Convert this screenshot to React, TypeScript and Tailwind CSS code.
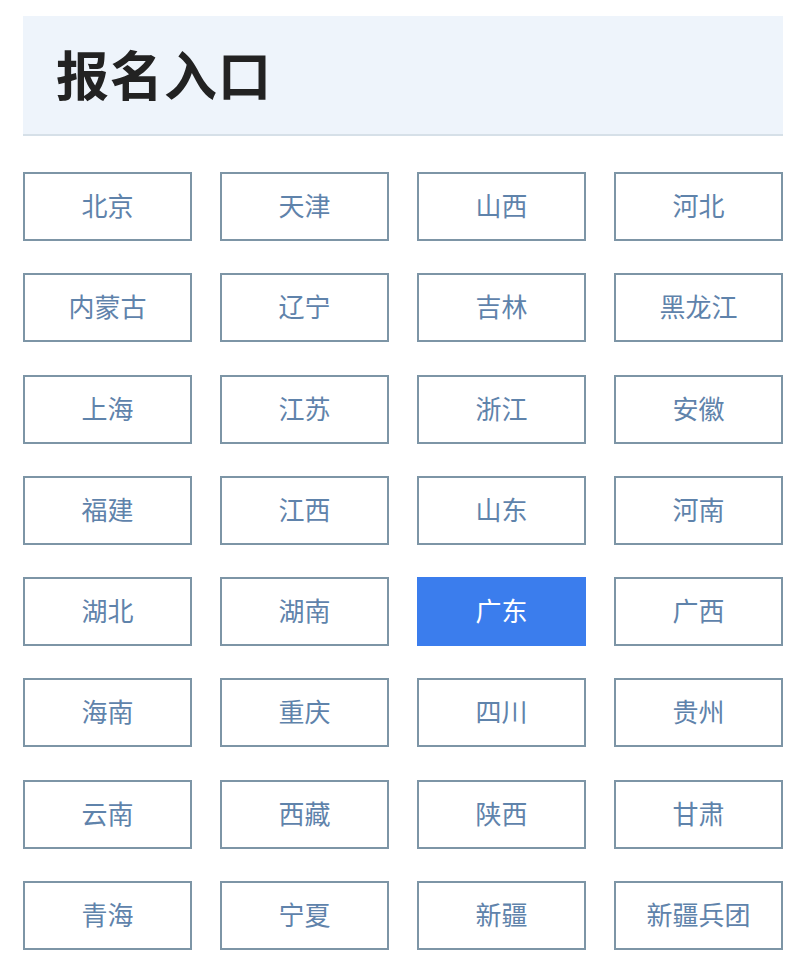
import React from "react";

const provinces = [
  "北京", "天津", "山西", "河北",
  "内蒙古", "辽宁", "吉林", "黑龙江",
  "上海", "江苏", "浙江", "安徽",
  "福建", "江西", "山东", "河南",
  "湖北", "湖南", "广东", "广西",
  "海南", "重庆", "四川", "贵州",
  "云南", "西藏", "陕西", "甘肃",
  "青海", "宁夏", "新疆", "新疆兵团",
];

const App: React.FC = () => {
  const active = "广东";

  return (
    <div
      className="w-[800px] h-[968px] bg-white pt-[16px] pl-[23px] pr-[17px]"
      style={{ fontFamily: '"Noto Sans", "Noto Sans CJK SC", sans-serif' }}
    >
      {/* header */}
      <div className="h-[120px] bg-[#eef4fb] border-b-2 border-[#d6e0e8] flex items-center pl-[33px]">
        <h1 className="text-[53px] font-bold text-[#222] leading-none tracking-[1px]">
          报名入口
        </h1>
      </div>

      {/* province grid */}
      <div className="grid grid-cols-4 gap-x-[28px] gap-y-[32.3px] mt-[36px]">
        {provinces.map((name) => (
          <button
            key={name}
            className={`h-[69px] flex items-center justify-center text-[26px] border-2 ${
              name === active
                ? "bg-[#3b7ded] border-[#3b7ded] text-white"
                : "bg-white border-[#7d95a6] text-[#5f83ab]"
            }`}
          >
            {name}
          </button>
        ))}
      </div>
    </div>
  );
};

export default App;
